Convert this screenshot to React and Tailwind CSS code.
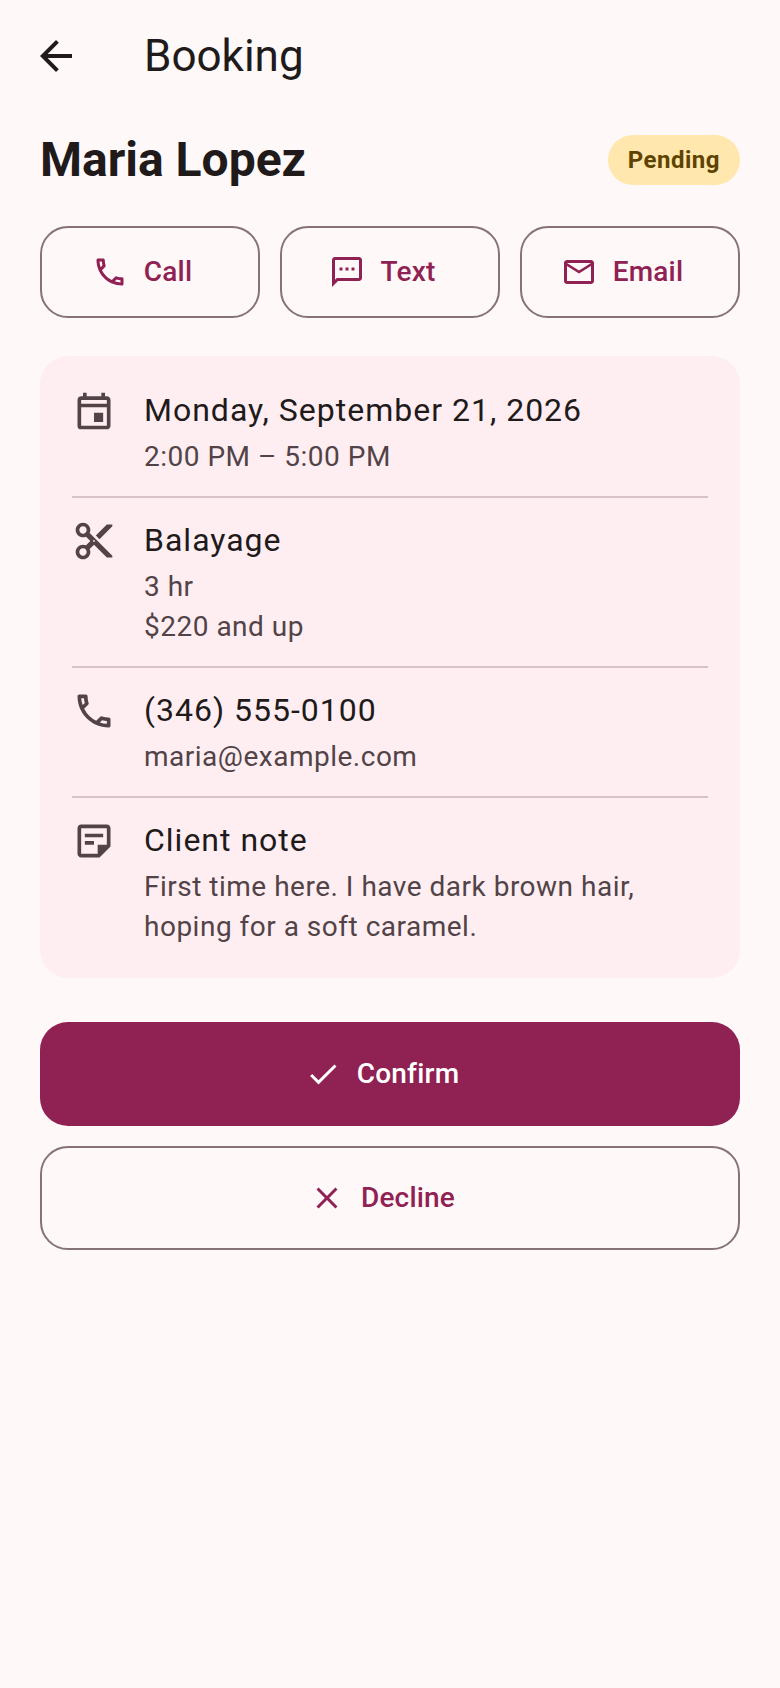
import { MdArrowBack, MdOutlineCall, MdOutlineSms, MdOutlineEmail, MdOutlineEvent, MdContentCut, MdOutlineStickyNote2, MdCheck, MdClose } from 'react-icons/md'

function ActionButton({ Icon, label }) {
  return (
    <button className="flex h-[92px] flex-1 items-center justify-center gap-[16px] rounded-[28px] border-2 border-[#857375] pr-[16px] text-[28px] font-medium tracking-[0.2px] text-[#902153]">
      <Icon className="text-[36px]" />
      {label}
    </button>
  )
}

function Row({ Icon, title, lines, last }) {
  return (
    <div className={`flex gap-[28px] pt-[20px] pb-[19px] ${last ? '' : 'border-b-2 border-[#d8c2c6]'}`}>
      <Icon className="mt-[1px] w-[44px] shrink-0 text-[44px] text-[#514347]" />
      <div className="min-w-0 flex-1">
        <div className="text-[32px] leading-[44px] tracking-[1px] text-[#201a1b]">{title}</div>
        <div className="mt-[5px]">
          {lines.map((line) => (
            <div key={line} className="text-[28px] leading-[40px] tracking-[0.5px] text-[#514347]">{line}</div>
          ))}
        </div>
      </div>
    </div>
  )
}

export default function App() {
  return (
    <div className="min-h-[1688px] bg-[#fff8f8] px-[40px] font-['Roboto',sans-serif]">
      <header className="-ml-[8px] flex h-[112px] items-center gap-[64px]">
        <MdArrowBack className="text-[48px] text-[#201a1b]" />
        <h1 className="text-[44px] text-[#201a1b]">Booking</h1>
      </header>

      <div className="mt-[20px] flex items-center justify-between">
        <h2 className="text-[48px] font-bold leading-[56px] text-[#201a1b]">Maria Lopez</h2>
        <span className="rounded-full bg-[#ffe7ae] px-[20px] py-[8px] text-[24px] font-bold leading-[34px] tracking-[0.5px] text-[#5f4300]">Pending</span>
      </div>

      <div className="mt-[38px] flex gap-[20px]">
        <ActionButton Icon={MdOutlineCall} label="Call" />
        <ActionButton Icon={MdOutlineSms} label="Text" />
        <ActionButton Icon={MdOutlineEmail} label="Email" />
      </div>

      <section className="mt-[38px] rounded-[28px] bg-[#ffeef1] px-[32px] py-[12px]">
        <Row Icon={MdOutlineEvent} title="Monday, September 21, 2026" lines={['2:00 PM – 5:00 PM']} />
        <Row Icon={MdContentCut} title="Balayage" lines={['3 hr', '$220 and up']} />
        <Row Icon={MdOutlineCall} title="(346) 555-0100" lines={['maria@example.com']} />
        <Row Icon={MdOutlineStickyNote2} title="Client note" lines={['First time here. I have dark brown hair, hoping for a soft caramel.']} last />
      </section>

      <button className="mt-[44px] flex h-[104px] w-full items-center justify-center gap-[16px] rounded-[28px] bg-[#902153] pr-[16px] text-[28px] font-medium tracking-[0.2px] text-white">
        <MdCheck className="text-[36px]" />
        Confirm
      </button>
      <button className="mt-[20px] flex h-[104px] w-full items-center justify-center gap-[16px] rounded-[28px] border-2 border-[#857375] pr-[16px] text-[28px] font-medium tracking-[0.2px] text-[#902153]">
        <MdClose className="text-[36px]" />
        Decline
      </button>
    </div>
  )
}
